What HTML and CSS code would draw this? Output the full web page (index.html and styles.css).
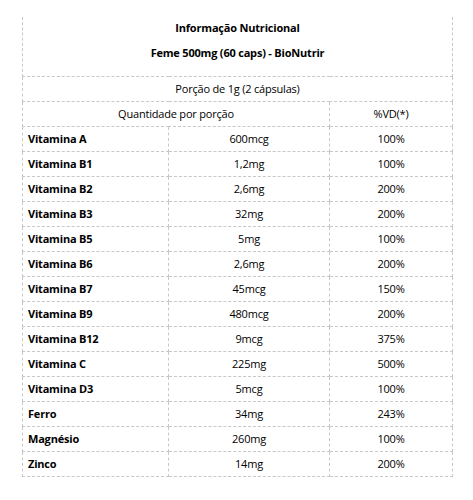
FILE: index.html
```html
<!DOCTYPE html>
<html lang="pt">
<head>
<meta charset="utf-8">
<link rel="stylesheet" href="styles.css">
</head>
<body>
<div class="wrap">
<table class="nutri">
  <colgroup>
    <col class="c1"><col class="c2"><col class="c3">
  </colgroup>
  <thead>
    <tr><th colspan="3" class="title"><div class="t1">Informação Nutricional</div><div class="t2">Feme 500mg (60 caps) - BioNutrir</div></th></tr>
    <tr><td colspan="3" class="center">Porção de 1g (2 cápsulas)</td></tr>
    <tr><td colspan="2" class="center">Quantidade por porção</td><td class="center">%VD(*)</td></tr>
  </thead>
  <tbody>
    <tr><td class="name">Vitamina A</td><td class="center">600mcg</td><td class="center">100%</td></tr>
    <tr><td class="name">Vitamina B1</td><td class="center">1,2mg</td><td class="center">100%</td></tr>
    <tr><td class="name">Vitamina B2</td><td class="center">2,6mg</td><td class="center">200%</td></tr>
    <tr><td class="name">Vitamina B3</td><td class="center">32mg</td><td class="center">200%</td></tr>
    <tr><td class="name">Vitamina B5</td><td class="center">5mg</td><td class="center">100%</td></tr>
    <tr><td class="name">Vitamina B6</td><td class="center">2,6mg</td><td class="center">200%</td></tr>
    <tr><td class="name">Vitamina B7</td><td class="center">45mcg</td><td class="center">150%</td></tr>
    <tr><td class="name">Vitamina B9</td><td class="center">480mcg</td><td class="center">200%</td></tr>
    <tr><td class="name">Vitamina B12</td><td class="center">9mcg</td><td class="center">375%</td></tr>
    <tr><td class="name">Vitamina C</td><td class="center">225mg</td><td class="center">500%</td></tr>
    <tr><td class="name">Vitamina D3</td><td class="center">5mcg</td><td class="center">100%</td></tr>
    <tr><td class="name">Ferro</td><td class="center">34mg</td><td class="center">243%</td></tr>
    <tr><td class="name">Magnésio</td><td class="center">260mg</td><td class="center">100%</td></tr>
    <tr><td class="name">Zinco</td><td class="center">14mg</td><td class="center">200%</td></tr>
  </tbody>
</table>
</div>
</body>
</html>
```
FILE: styles.css
```css
html, body {
  margin: 0;
  padding: 0;
  background: #fff;
}
body {
  font-family: "Open Sans", "Noto Sans", "Liberation Sans", sans-serif;
  font-size: 11px;
  letter-spacing: -0.2px;
  color: #000;
}
.wrap {
  padding: 17px 0 0 22px;
}
.nutri {
  border-collapse: collapse;
  width: 430px;
  table-layout: fixed;
}
.c1 { width: 146px; }
.c2 { width: 161px; }
.c3 { width: 123px; }
.nutri td, .nutri th {
  border: 1px dashed #c8c8c8;
  height: 24px;
  padding: 0 5px;
  line-height: 24px;
  vertical-align: middle;
}
.nutri th.title {
  border-top: none;
  height: auto;
  padding: 0 0 12px;
  font-weight: 700;
  text-align: center;
}
.t1 { line-height: 22px; }
.t2 { line-height: 22px; margin-top: 3px; }
.center { text-align: center; }
.name {
  font-weight: 700;
  text-align: left;
}
```
